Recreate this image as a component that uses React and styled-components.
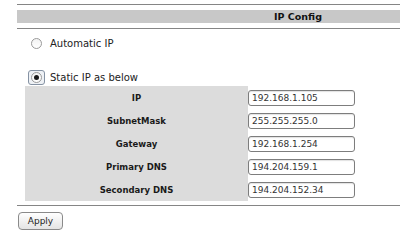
import React from 'react'
import styled, { createGlobalStyle } from "styled-components";

const GlobalStyle = createGlobalStyle`
body {
  margin: 0;
  background: #fff;
  overflow: hidden;
  font-family: "DejaVu Sans", Verdana, sans-serif;
}
`;

const Page = styled.div`
padding: 4px 0 0 17px;
`;

const Rule = styled.div`
height: 1px;
background: #858585;
margin-top: ${(p) => p.$top || 0}px;
`;

const HeaderBar = styled.div`
margin-top: 5px;
height: 13px;
line-height: 13px;
padding-left: 179px;
background: #c8c8c8;
text-align: center;
font-size: 9.5px;
font-weight: bold;
color: #111;
`;

const RadioRow = styled.label`
display: flex;
align-items: center;
gap: 5px;
height: 14px;
margin-top: ${(p) => p.$top}px;
font-size: 10px;
color: #222;
`;

const RadioSlot = styled.span`
width: 17px;
margin-left: 11px;
display: flex;
justify-content: center;
align-items: center;
`;

const Radio = styled.span`
width: 11px;
height: 11px;
box-sizing: border-box;
border-radius: 50%;
border: 1px solid #9a9a9a;
background: linear-gradient(#f2f2f2, #ffffff);
display: flex;
justify-content: center;
align-items: center;
`;

const FocusRing = styled.span`
width: 17px;
height: 15px;
box-sizing: border-box;
border: 1px solid #8592a3;
border-radius: 3px;
background: #eef1f5;
display: flex;
justify-content: center;
align-items: center;
`;

const Dot = styled.span`
width: 5px;
height: 5px;
border-radius: 50%;
background: #1a1a1a;
`;

const Table = styled.div`
margin: 2px 0 0 8px;
display: grid;
grid-template-columns: 223px 1fr;
grid-auto-rows: 23px;
`;

const Label = styled.div`
background: #dcdcdc;
display: flex;
justify-content: center;
align-items: center;
font-size: 8.5px;
font-weight: bold;
color: #1a1a1a;
`;

const Cell = styled.div`
display: flex;
align-items: center;
`;

const Field = styled.input`
width: 107px;
height: 16px;
box-sizing: border-box;
border: 1px solid #7d7d7d;
border-radius: 3px;
padding: 0 3px;
font-family: "DejaVu Sans", Verdana, sans-serif;
font-size: 9px;
color: #333;
background: #fff;
box-shadow: inset 0 1px 1px rgba(0, 0, 0, 0.12);
outline: none;
`;

const Button = styled.button`
margin: 6px 0 0 1px;
width: 45px;
height: 18px;
border: 1px solid #8a8a8a;
border-radius: 4px;
background: linear-gradient(#ffffff, #e4e4e4);
font-family: "DejaVu Sans", Verdana, sans-serif;
font-size: 9px;
color: #222;
padding: 0;
`;

const rows = [
  ["IP", "192.168.1.105"],
  ["SubnetMask", "255.255.255.0"],
  ["Gateway", "192.168.1.254"],
  ["Primary DNS", "194.204.159.1"],
  ["Secondary DNS", "194.204.152.34"],
];

export default function App() {
  return (
    <>
      <GlobalStyle />
      <Page>
        <Rule />
        <HeaderBar>IP Config</HeaderBar>
        <Rule $top={5} />
        <RadioRow $top={7}>
          <RadioSlot>
            <Radio />
          </RadioSlot>
          Automatic IP
        </RadioRow>
        <RadioRow $top={20}>
          <RadioSlot>
            <FocusRing>
              <Radio>
                <Dot />
              </Radio>
            </FocusRing>
          </RadioSlot>
          Static IP as below
        </RadioRow>
        <Table>
          {rows.map(([name, value]) => (
            <React.Fragment key={name}>
              <Label>{name}</Label>
              <Cell>
                <Field defaultValue={value} />
              </Cell>
            </React.Fragment>
          ))}
        </Table>
        <Rule $top={4} />
        <Button>Apply</Button>
      </Page>
    </>
  );
}
